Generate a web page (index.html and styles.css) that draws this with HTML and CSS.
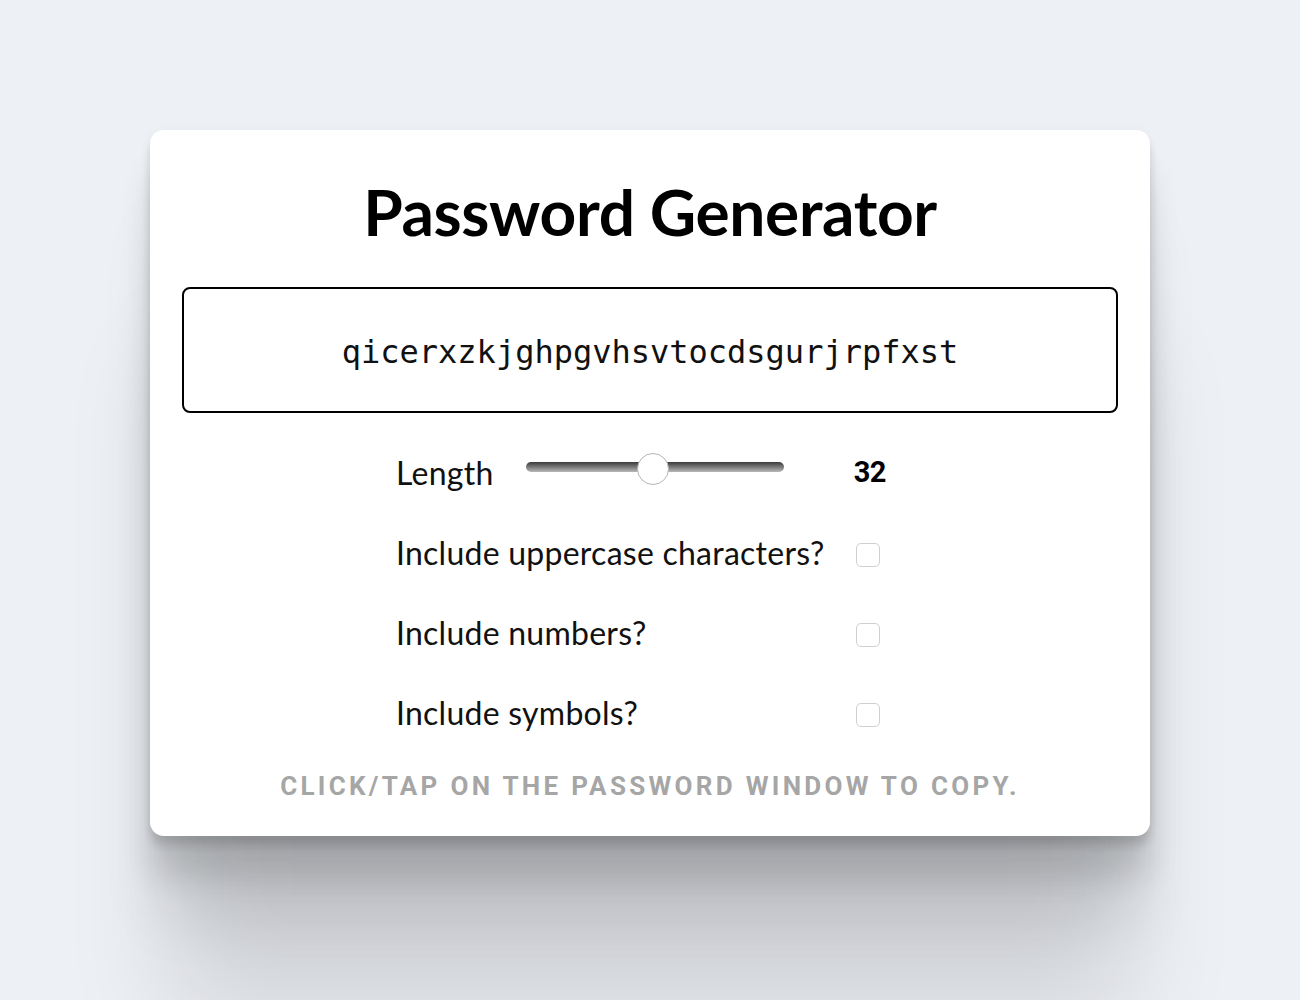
FILE: index.html
```html
<!DOCTYPE html>
<html lang="en">
<head>
<meta charset="utf-8">
<title>Password Generator</title>
<link rel="stylesheet" href="styles.css">
</head>
<body>
<main class="card">
  <h1 class="title">Password Generator</h1>
  <div class="password">qicerxzkjghpgvhsvtocdsgurjrpfxst</div>
  <div class="options">
    <div class="row">
      <label class="label label-length" for="len">Length</label>
      <input class="slider" id="len" type="range" min="1" max="64" value="32">
      <span class="value">32</span>
    </div>
    <div class="row">
      <label class="label" for="up">Include uppercase characters?</label>
      <input class="check" id="up" type="checkbox">
    </div>
    <div class="row">
      <label class="label" for="num">Include numbers?</label>
      <input class="check" id="num" type="checkbox">
    </div>
    <div class="row">
      <label class="label" for="sym">Include symbols?</label>
      <input class="check" id="sym" type="checkbox">
    </div>
  </div>
  <p class="hint">Click/tap on the password window to copy.</p>
</main>
</body>
</html>
```
FILE: styles.css
```css
html, body {
  margin: 0;
  padding: 0;
}
body {
  background: #edf0f5;
  font-family: Lato, "Noto Sans", sans-serif;
  color: #111;
  min-height: 1000px;
  overflow: hidden;
}
.card {
  width: 1000px;
  box-sizing: border-box;
  margin: 130px auto 0;
  padding: 32px 32px 33px;
  background: #fff;
  border-radius: 14px;
  box-shadow:
    0 0 12px rgba(0, 0, 0, 0.03),
    0 10px 10px rgba(0, 0, 0, 0.14),
    0 40px 30px rgba(0, 0, 0, 0.12),
    0 90px 60px -10px rgba(0, 0, 0, 0.1),
    0 200px 100px -20px rgba(0, 0, 0, 0.12);
  display: flex;
  flex-direction: column;
}
.title {
  margin: 0 0 25px;
  height: 100px;
  line-height: 100px;
  text-align: center;
  font-size: 64px;
  font-weight: 700;
  letter-spacing: -0.35px;
  color: #000;
}
.password {
  height: 126px;
  box-sizing: border-box;
  border: 2px solid #000;
  border-radius: 8px;
  display: flex;
  align-items: center;
  justify-content: center;
  padding-top: 3px;
  font-family: "DejaVu Sans Mono", "Liberation Mono", monospace;
  font-size: 32px;
  color: #111;
}
.options {
  width: 490px;
  margin: 19px 0 0 214px;
}
.row {
  height: 80px;
  display: flex;
  align-items: center;
}
.label {
  font-size: 32px;
  letter-spacing: 0.25px;
}
.label-length {
  width: 130px;
}
.slider {
  -webkit-appearance: none;
  appearance: none;
  width: 258px;
  height: 10px;
  margin: 0 0 10px;
  border-radius: 5px;
  background: linear-gradient(#3a3a3a, #b8b8b8);
  outline: none;
}
.slider::-webkit-slider-thumb {
  -webkit-appearance: none;
  appearance: none;
  width: 32px;
  height: 32px;
  border-radius: 50%;
  background: #fff;
  border: 1px solid #b5b5b5;
  box-sizing: border-box;
  transform: translateY(2px);
}
.value {
  margin-left: auto;
  margin-right: 0;
  font-family: Roboto, sans-serif;
  font-weight: 700;
  font-size: 29px;
  letter-spacing: -0.5px;
  color: #000;
}
.check {
  -webkit-appearance: none;
  appearance: none;
  margin: 0 6px 0 auto;
  width: 24px;
  height: 24px;
  box-sizing: border-box;
  border: 1px solid #cfcfcf;
  border-radius: 5px;
  background: #fff;
  position: relative;
  top: 3px;
}
.hint {
  margin: 17px 0 0;
  height: 34px;
  line-height: 34px;
  text-align: center;
  text-transform: uppercase;
  font-family: Roboto, sans-serif;
  font-weight: 700;
  font-size: 26px;
  letter-spacing: 3.3px;
  color: #a6a6a6;
}
```
